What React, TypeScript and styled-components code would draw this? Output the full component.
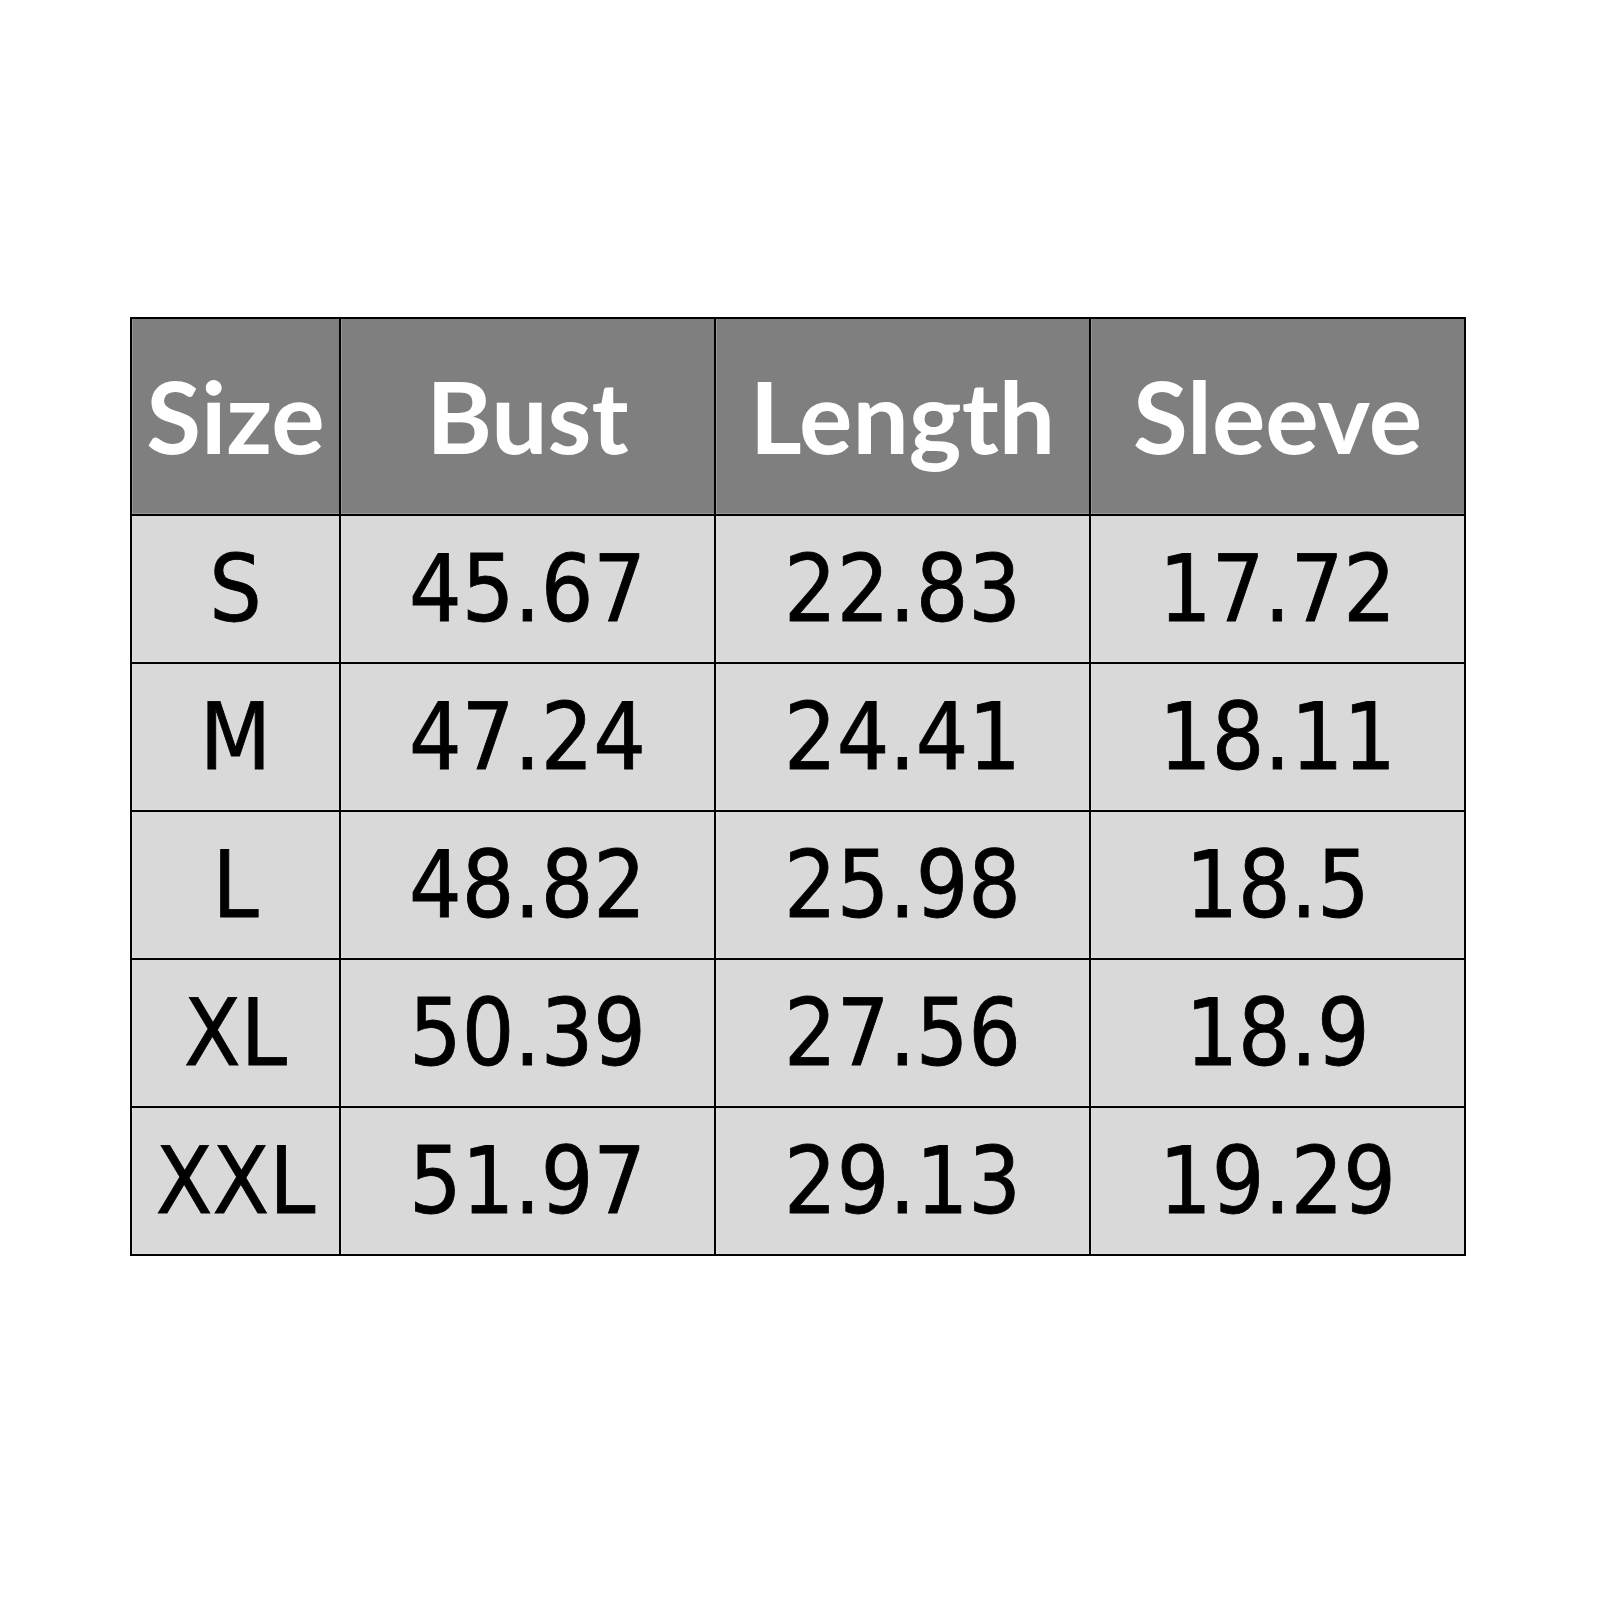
import styled, { createGlobalStyle } from "styled-components";

const sizes = [
    ["S", "45.67", "22.83", "17.72"],
    ["M", "47.24", "24.41", "18.11"],
    ["L", "48.82", "25.98", "18.5"],
    ["XL", "50.39", "27.56", "18.9"],
    ["XXL", "51.97", "29.13", "19.29"],
];

const headers = ["Size", "Bust", "Length", "Sleeve"];

export default function App() {
    return (
        <>
            <GlobalStyle/>
            <Page>
                <SizeTable>
                    {headers.map((h) => (
                        <HeadCell key={h}>{h}</HeadCell>
                    ))}
                    {sizes.map((row) =>
                        row.map((value, i) => (
                            <BodyCell key={row[0] + i}>{value}</BodyCell>
                        ))
                    )}
                </SizeTable>
            </Page>
        </>
    )
}

const GlobalStyle = createGlobalStyle`
    body {
        margin: 0;
        background: #ffffff;
    }
`

const Page = styled.div`
    width: 1600px;
    height: 1600px;
    padding: 317px 0 0 130px;
    box-sizing: border-box;
    background: #ffffff;`

const SizeTable = styled.div`
    display: inline-grid;
    grid-template-columns: 207px 373px 373px 373px;
    grid-template-rows: 195px repeat(5, 146px);
    gap: 2px;
    padding: 2px;
    background: #000000;`

const Cell = styled.div`
    display: flex;
    align-items: center;
    justify-content: center;
    box-shadow: inset 1px 0 0 rgba(255, 255, 255, 0.2), inset 0 -1px 0 rgba(255, 255, 255, 0.2);`

const HeadCell = styled(Cell)`
    background: #7f7f7f;
    color: #ffffff;
    font-family: Lato, "Open Sans", sans-serif;
    font-weight: 700;
    font-size: 100px;
    padding-bottom: 4px;`

const BodyCell = styled(Cell)`
    background: #d9d9d9;
    color: #000000;
    font-family: "DejaVu Sans Condensed", "DejaVu Sans", sans-serif;
    font-stretch: condensed;
    font-size: 92px;
    -webkit-text-stroke: 0.8px #000000;`
